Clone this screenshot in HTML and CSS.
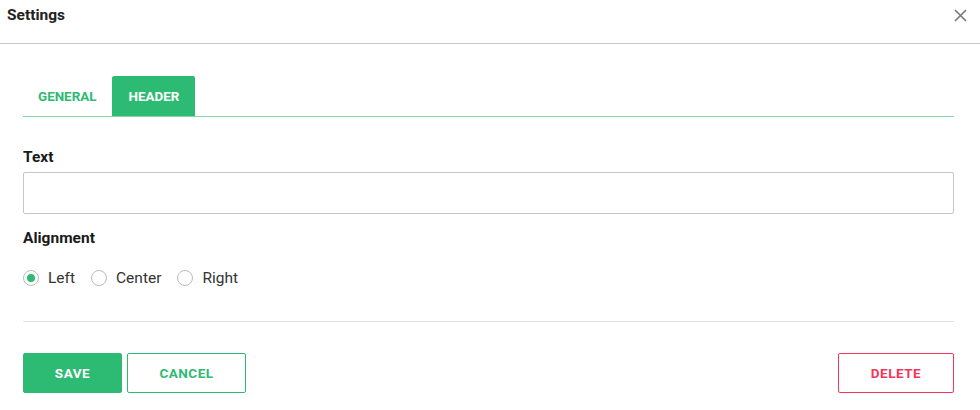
FILE: index.html
```html
<!DOCTYPE html>
<html lang="en">
<head>
<meta charset="UTF-8">
<meta name="viewport" content="width=device-width, initial-scale=1.0">
<link rel="stylesheet" href="styles.css">
</head>
<body>
<div class="modal">
    <div class="modal-head">
        <span class="title">Settings</span>
        <button class="close" aria-label="Close">
            <svg width="13" height="13" viewBox="0 0 13 13"><path d="M1 1L12 12M12 1L1 12" stroke="#777" stroke-width="1.6"/></svg>
        </button>
    </div>

    <div class="modal-body">
        <div class="tabs">
            <span class="tab">GENERAL</span>
            <span class="tab active">HEADER</span>
        </div>

        <label class="field-label" for="txt">Text</label>
        <input type="text" id="txt" class="text-input">

        <div class="field-label align-label">Alignment</div>
        <div class="radios">
            <label class="radio"><span class="dot checked"></span>Left</label>
            <label class="radio"><span class="dot"></span>Center</label>
            <label class="radio"><span class="dot"></span>Right</label>
        </div>

        <div class="divider"></div>

        <div class="actions">
            <button class="btn save">SAVE</button>
            <button class="btn cancel">CANCEL</button>
            <button class="btn delete">DELETE</button>
        </div>
    </div>
</div>
</body>
</html>
```

FILE: styles.css
```css
* {
    box-sizing: border-box;
}
body {
    margin: 0;
    background: #fff;
    font-family: Roboto, "Liberation Sans", sans-serif;
    color: #222;
}
.modal-head {
    height: 44px;
    border-bottom: 1px solid #c8c8c8;
    display: flex;
    align-items: center;
    justify-content: space-between;
    padding: 0 13px 13px 7px;
}
.title {
    font-size: 15.5px;
    line-height: 18px;
    font-weight: 700;
    color: #222;
}
.close {
    border: none;
    background: none;
    padding: 0;
    display: flex;
}
.modal-body {
    padding: 32px 26px 0 23px;
}
.tabs {
    display: flex;
    border-bottom: 1px solid #85d4aa;
    height: 41px;
}
.tab {
    font-size: 13.4px;
    font-weight: 700;
    color: #2dbb74;
    display: flex;
    align-items: center;
    padding: 0 15px;
}
.tab.active {
    background: #2dbb74;
    color: #fff;
    border-radius: 2px 2px 0 0;
    padding: 0 16px;
    margin-left: 1px;
}
.field-label {
    display: block;
    font-size: 15.5px;
    line-height: 16px;
    font-weight: 700;
    margin-top: 32px;
    color: #1a1a1a;
}
.text-input {
    display: block;
    width: 100%;
    height: 42px;
    margin-top: 7px;
    border: 1px solid #c6c6c6;
    border-radius: 2px;
    font-size: 14px;
}
.align-label {
    margin-top: 16px;
}
.radios {
    display: flex;
    gap: 16px;
    margin-top: 23px;
    height: 18px;
}
.radio {
    display: flex;
    align-items: center;
    font-size: 15.5px;
    line-height: 18px;
    color: #333;
}
.dot {
    width: 16px;
    height: 16px;
    border: 1px solid #bbb;
    border-radius: 50%;
    margin-right: 9px;
    position: relative;
}
.dot.checked::after {
    content: "";
    position: absolute;
    left: 3px;
    top: 3px;
    width: 8px;
    height: 8px;
    border-radius: 50%;
    background: #2dbb74;
}
.divider {
    border-top: 1px solid #e2e2e2;
    margin-top: 34px;
}
.actions {
    display: flex;
    gap: 5px;
    margin-top: 31px;
}
.btn {
    height: 40px;
    font-family: Roboto, "Liberation Sans", sans-serif;
    font-size: 13.5px;
    font-weight: 700;
    letter-spacing: 0.5px;
    border-radius: 2px;
    background: #fff;
}
.save {
    width: 99px;
    background: #2dbb74;
    border: 1px solid #2dbb74;
    color: #fff;
}
.cancel {
    width: 119px;
    border: 1px solid #2dbb74;
    color: #2dbb74;
}
.delete {
    width: 116px;
    margin-left: auto;
    border: 1px solid #f2375a;
    color: #f2375a;
}
```
